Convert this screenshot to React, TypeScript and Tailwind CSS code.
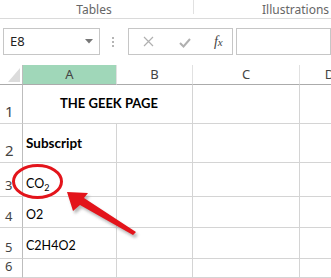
import React from "react";

const rowHeights = [39, 39, 34, 31, 31, 19];

const Cell = ({
  children,
  className = "",
}: {
  children?: React.ReactNode;
  className?: string;
}) => (
  <div className={`border-r border-b border-[#d4d4d4] ${className}`}>{children}</div>
);

const RowHead = ({ n, big }: { n: number; big?: boolean }) => (
  <div
    className={`flex items-end border-r border-b border-r-[#bdbdbd] border-b-[#d4d4d4] pl-[5px] pb-[1px] text-[#444] ${
      big ? "text-[15px]" : "text-[13px]"
    }`}
    style={{ fontFamily: "'Noto Sans', sans-serif" }}
  >
    {n}
  </div>
);

export default function App() {
  return (
    <div className="relative h-[278px] w-[331px] overflow-hidden bg-white" style={{ fontFamily: "Lato, sans-serif" }}>
      {/* ribbon group labels */}
      <div
        className="flex h-[19px] border-b border-[#dadada] text-[12px] text-[#666]"
        style={{ fontFamily: "'Noto Sans', sans-serif" }}
      >
        <div className="flex w-[193px] justify-center pr-[5px] leading-[19px]">Tables</div>
        <div className="h-[14px] w-px bg-[#e1e1e1]" />
        <div className="flex-1 pl-[68px] leading-[19px] whitespace-nowrap">Illustrations</div>
      </div>

      {/* formula bar */}
      <div className="mt-[9px] flex h-[27px] pl-[3px]">
        <div className="flex w-[102px] items-center justify-between border border-[#c6c6c6] pl-[6px] pr-[6px]">
          <span className="text-[13px] text-[#222]" style={{ fontFamily: "'Noto Sans', sans-serif" }}>
            E8
          </span>
          <svg width="8" height="5" viewBox="0 0 8 5">
            <path d="M0 0h8L4 4.5z" fill="#777" />
          </svg>
        </div>
        <div className="flex w-[29px] flex-col items-center justify-center gap-[2px] pr-[2px]">
          <span className="h-[2px] w-[2px] bg-[#b5b5b5]" />
          <span className="h-[2px] w-[2px] bg-[#b5b5b5]" />
          <span className="h-[2px] w-[2px] bg-[#b5b5b5]" />
        </div>
        <div className="flex w-[111px] items-center border border-[#c6c6c6]">
          <svg className="ml-[14px]" width="11" height="11" viewBox="0 0 11 11">
            <path d="M1 1l9 9M10 1l-9 9" stroke="#b0b0b0" strokeWidth="1.2" />
          </svg>
          <svg className="ml-[25px] mt-[2px]" width="12" height="10" viewBox="0 0 12 10">
            <path d="M1 5l3.5 3.5L11 1" stroke="#b0b0b0" strokeWidth="2" fill="none" />
          </svg>
          <span
            className="ml-[23px] text-[14px] italic text-[#444]"
            style={{ fontFamily: "'Liberation Serif', serif" }}
          >
            f<span className="text-[11px]">x</span>
          </span>
        </div>
        <div className="ml-[3px] w-[100px] border border-[#c6c6c6]" />
      </div>

      {/* sheet */}
      <div
        className="mt-[10px] grid grid-cols-[23px_94px_76px_107px_60px]"
        style={{ gridTemplateRows: `20px ${rowHeights.map((h) => h + "px").join(" ")}` }}
      >
        {/* header row */}
        <div className="relative border-r border-b border-r-[#bdbdbd] border-b-[#ababab]">
          <svg className="absolute left-[8px] top-[3px]" width="12" height="14" viewBox="0 0 12 14">
            <path d="M12 0v14H0z" fill="#dcdcdc" />
          </svg>
        </div>
        {["A", "B", "C", "D"].map((c, i) => (
          <div
            key={c}
            className={`flex items-center justify-center border-r border-b border-r-[#e1e1e1] border-b-[#ababab] text-[13px] text-[#444] ${
              i === 0 ? "bg-[#a0d7b9]" : "bg-white"
            }`}
            style={{ fontFamily: "'Noto Sans', sans-serif" }}
          >
            {c}
          </div>
        ))}

        {/* row 1 */}
        <RowHead n={1} big />
        <div className="col-span-2 flex items-center justify-center border-r border-b border-[#d4d4d4] pl-[3px] text-[13px] font-bold text-black">
          THE GEEK PAGE
        </div>
        <Cell />
        <Cell />

        {/* row 2 */}
        <RowHead n={2} big />
        <Cell className="flex items-center pl-[3px] text-[13.5px] font-bold text-black">Subscript</Cell>
        <Cell />
        <Cell />
        <Cell />

        {/* row 3 */}
        <RowHead n={3} />
        <Cell className="flex items-end pb-[2px] pl-[3px] text-[12.5px] text-black">
          <span>
            CO<sub className="text-[9px]">2</sub>
          </span>
        </Cell>
        <Cell />
        <Cell />
        <Cell />

        {/* row 4 */}
        <RowHead n={4} />
        <Cell className="flex items-end pb-[2px] pl-[3px] text-[12.5px] text-black">O2</Cell>
        <Cell />
        <Cell />
        <Cell />

        {/* row 5 */}
        <RowHead n={5} />
        <Cell className="flex items-end pb-[2px] pl-[3px] text-[12.5px] text-black">C2H4O2</Cell>
        <Cell />
        <Cell />
        <Cell />

        {/* row 6 */}
        <RowHead n={6} />
        <Cell />
        <Cell />
        <Cell />
        <Cell />
      </div>

      {/* annotation: circle and arrow */}
      <svg className="pointer-events-none absolute left-0 top-0" width="331" height="278" viewBox="0 0 331 278">
        <defs>
          <filter id="sh" x="-20%" y="-20%" width="140%" height="140%">
            <feGaussianBlur stdDeviation="1.5" />
          </filter>
        </defs>
        <ellipse cx="37.5" cy="181.5" rx="24" ry="16" fill="none" stroke="#e3141b" strokeWidth="3" />
        <path
          d="M69 195 L90 196 L86 201 L138 235 L135 238 L82 208 L75 214 Z"
          fill="#888"
          opacity="0.6"
          filter="url(#sh)"
        />
        <path d="M67 192 L88 193 L84 198 L136 232 L133 235 L80 205 L73 211 Z" fill="#e3141b" />
      </svg>
    </div>
  );
}
